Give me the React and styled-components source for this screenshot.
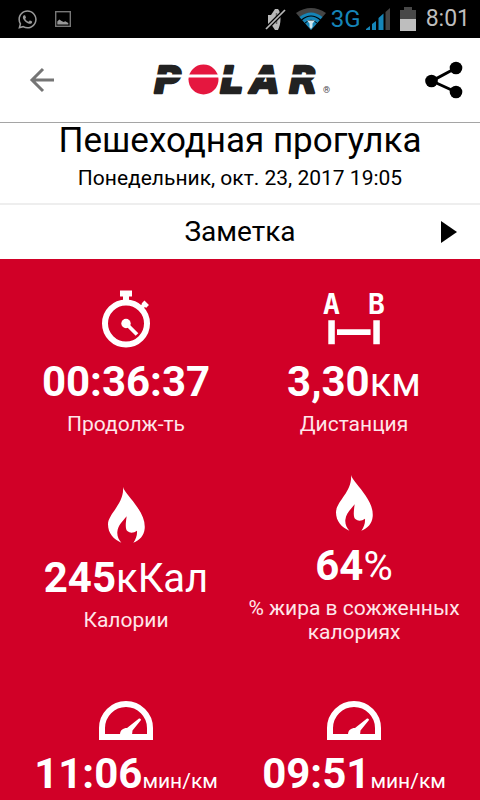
import styled, { createGlobalStyle } from "styled-components";
import { FaWhatsapp } from "react-icons/fa";

const GlobalStyle = createGlobalStyle`
  * {
    box-sizing: border-box;
  }

  body {
    margin: 0;
    background: #d10027;
    font-family: Roboto, "Noto Sans", sans-serif;
    color: #000;
  }

  h1, p, dl, dt, dd {
    margin: 0;
  }

  svg {
    display: block;
    flex: none;
    overflow: visible;
  }
`;

const StatusBar = styled.div`
  display: flex;
  align-items: center;
  justify-content: space-between;
  height: 38px;
  padding: 0 10px 0 17px;
  background: #000;
  color: #999;
`;

const StatusGroup = styled.div`
  display: flex;
  align-items: center;
  gap: ${({ $gap }) => $gap}px;
`;

const Network = styled.span`
  font-size: 24px;
  line-height: 36px;
  color: #1585b8;
`;

const Clock = styled.time`
  font-size: 23px;
  line-height: 38px;
  color: #bebebe;
`;

const Header = styled.header`
  display: flex;
  align-items: center;
  justify-content: space-between;
  height: 85px;
  padding: 0 17px 0 29px;
  background: #fff;
  border-bottom: 1px solid #a5a5a5;
`;

const IconButton = styled.button`
  display: flex;
  padding: 0;
  border: 0;
  background: none;
  color: inherit;
  cursor: pointer;
`;

const Summary = styled.section`
  padding: 1px 0 13px;
  background: #fff;
  text-align: center;
  border-bottom: 2px solid #eee;
`;

const Title = styled.h1`
  font-size: 35px;
  font-weight: 400;
  line-height: 34px;
`;

const DateText = styled.p`
  padding-top: 8px;
  font-size: 21px;
  line-height: 24px;
`;

const NoteButton = styled.button`
  display: grid;
  grid-template-columns: 1fr auto 1fr;
  align-items: center;
  width: 100%;
  height: 54px;
  padding: 0 23px;
  border: 0;
  background: #fff;
  color: #000;
  font: 400 28px/32px Roboto, "Noto Sans", sans-serif;
  cursor: pointer;

  svg {
    grid-column: 3;
    justify-self: end;
  }
`;

const NoteLabel = styled.span`
  grid-column: 2;
`;

const Metrics = styled.dl`
  display: grid;
  grid-template-columns: 1fr 1fr;
  align-items: center;
  row-gap: 38px;
  padding: 31px 12px 0;
  background: #d10027;
  color: #fff;
`;

const MetricItem = styled.div`
  display: flex;
  flex-direction: column;
  align-items: center;
  text-align: center;
`;

const IconBox = styled.div`
  display: flex;
  align-items: ${({ $align }) => $align || "center"};
  height: 58px;
  margin-bottom: 9px;
`;

const Value = styled.dd`
  font-size: 42px;
  font-weight: 700;
  line-height: 49px;
  white-space: nowrap;
`;

const Unit = styled.span`
  font-size: ${({ $small }) => ($small ? 21 : 40)}px;
  font-weight: 400;
  line-height: 1;
`;

const Label = styled.dt`
  order: 1;
  padding-top: 6px;
  font-size: 21px;
  line-height: 24px;
  color: #ffe6ea;
`;

function PictureIcon() {
  return (
    <svg width="16" height="16" viewBox="0 0 16 16" fill="none">
      <rect x="0.7" y="0.7" width="14.6" height="14.6" stroke="#777" strokeWidth="1.4" />
      <path d="M2.3 13.5V10.5l2-2 2.3 1.5 2 1 1.7-.8 3 1.8v1.5z" fill="#999" />
    </svg>
  );
}

function MuteIcon() {
  return (
    <svg width="21" height="24" viewBox="0 0 21 24">
      <path d="M3 8h3l4-6h3c2 2 2.5 6 2.5 10s-1 8-2.5 11h-3l-4-6H3z" fill="#b9b9b9" />
      <path d="M11.5 6v11" stroke="#666" strokeWidth="1.5" />
      <path d="M1 22L20 3" stroke="#000" strokeWidth="4" />
      <path d="M1 22L20 3" stroke="#b9b9b9" strokeWidth="1.7" />
    </svg>
  );
}

function WifiIcon() {
  return (
    <svg width="30" height="22" viewBox="0 0 30 22">
      <path d="M0 5Q15-5 30 5L15 22z" fill="#444" />
      <path d="M3.5 9Q15 0 26.5 9L15 22z" fill="#1585b8" />
      <path d="M5.5 12Q15 4 24.5 12" fill="none" stroke="#000" strokeWidth="1.2" />
      <path d="M8.5 15.5Q15 9 21.5 15.5" fill="none" stroke="#000" strokeWidth="1" />
      <path d="M11 12.5h8l-2.5 3V19L15 21l-1.5-2v-3.5z" fill="#cfe6ef" />
    </svg>
  );
}

function SignalIcon() {
  return (
    <svg width="24" height="22" viewBox="0 0 24 22">
      <path d="M0 22v-1l4-3v4zM6 22v-6l4-3v9zM12.5 22V10l5-4.5V22z" fill="#1585b8" />
      <path d="M19.5 22V4L24 0v22z" fill="#444" />
    </svg>
  );
}

function BatteryIcon() {
  return (
    <svg width="16" height="24" viewBox="0 0 16 24">
      <path d="M0 3h4V0h8v3h4v9H0z" fill="#484848" />
      <path d="M0 12h16v12H0z" fill="#bebebe" />
    </svg>
  );
}

function BackIcon() {
  return (
    <svg width="26" height="24" viewBox="0 0 26 24" fill="none" stroke="#757575" strokeWidth="3">
      <path d="M25 12H4M14 1L3 12l11 11" />
    </svg>
  );
}

function ShareIcon() {
  return (
    <svg width="38" height="38" viewBox="0 0 38 38">
      <path d="M31 7L7 20l24 11" fill="none" stroke="#000" strokeWidth="3" />
      <circle cx="31" cy="7" r="6.3" />
      <circle cx="6.5" cy="20" r="6.3" />
      <circle cx="31" cy="31" r="6.3" />
    </svg>
  );
}

function PolarLogo() {
  return (
    <svg width="180" height="32" viewBox="0 0 180 32" role="img" aria-label="Polar">
      <g
        fill="#222"
        stroke="#222"
        strokeWidth="2.5"
        strokeLinejoin="round"
        fontFamily="DejaVu Sans"
        fontSize="37"
        fontWeight="700"
        fontStyle="oblique"
      >
        <text x="4" y="29">P</text>
        <text x="70" y="29">L</text>
        <text x="101" y="29">A</text>
        <text x="139" y="29">R</text>
      </g>
      <circle cx="53.5" cy="15.5" r="15" fill="#e5173f" />
      <path d="M0 10.5h172v3H0z" fill="#fff" />
      <text x="173" y="29" fontFamily="Roboto" fontSize="9" fill="#444">®</text>
    </svg>
  );
}

function StopwatchIcon() {
  return (
    <svg width="50" height="58" viewBox="-1 0 50 58" fill="none" stroke="#fff">
      <circle cx="24" cy="33.5" r="21" strokeWidth="6" />
      <path d="M18 0.5h12v6H18zM21 6h6v5h-6z" fill="#fff" stroke="none" />
      <path d="M37 20l7-7" strokeWidth="4" />
      <path d="M41 12l4.5 4.5" strokeWidth="4" />
      <circle cx="24" cy="33.5" r="4.7" fill="#fff" stroke="none" />
      <path d="M24 33.5l11 11" strokeWidth="3.7" />
    </svg>
  );
}

function DistanceIcon() {
  return (
    <svg width="62" height="52" viewBox="0 0 62 52" fill="#fff">
      <g fontFamily="DejaVu Sans Mono" fontSize="28" fontWeight="700">
        <text x="0" y="21">A</text>
        <text x="45" y="21">B</text>
      </g>
      <path d="M5.3 27.3h6.5v24H5.3zM50.3 27.3h6.5v24h-6.5zM14 36.3h33.6V42H14z" />
    </svg>
  );
}

function FlameIcon() {
  return (
    <svg width="37" height="56" viewBox="0 0 111 168" fill="#fff">
      <path d="M45 0C49 15 71 35 89 62c15 22 23 43 21 63-2 20-15 35-34 42 8-11 12-22 11-36-9 7-21 8-28 2-7-6-7-18-3-45-14 18-26 27-28 47-1 13 4 23 12 32C18 158 0 140 0 112 0 80 50 50 45 0z" />
    </svg>
  );
}

function GaugeIcon() {
  return (
    <svg width="54" height="39" viewBox="0 0 54 39">
      <path d="M3 36V27a24 24 0 0 1 48 0v9z" fill="none" stroke="#fff" strokeWidth="6" />
      <path d="M21 34c0-5 3-7 7-7l12-9.5q2-.5 2 1.5L33.5 29.5 33 34z" fill="#fff" />
    </svg>
  );
}

const metrics = [
  { icon: <StopwatchIcon />, value: "00:36:37", label: "Продолж-ть" },
  { icon: <DistanceIcon />, value: "3,30", unit: "км", label: "Дистанция" },
  { icon: <FlameIcon />, value: "245", unit: "кКал", label: "Калории" },
  { icon: <FlameIcon />, value: "64", unit: "%", label: "% жира в сожженных калориях" },
  { icon: <GaugeIcon />, value: "11:06", unit: "мин/км", smallUnit: true, align: "flex-end" },
  { icon: <GaugeIcon />, value: "09:51", unit: "мин/км", smallUnit: true, align: "flex-end" },
];

function Metric({ icon, value, unit, smallUnit, label, align }) {
  return (
    <MetricItem>
      <IconBox $align={align}>{icon}</IconBox>
      {label && <Label>{label}</Label>}
      <Value>
        {value}
        {unit && <Unit $small={smallUnit}>{unit}</Unit>}
      </Value>
    </MetricItem>
  );
}

function App() {
  return (
    <>
      <GlobalStyle />
      <StatusBar>
        <StatusGroup $gap={17}>
          <FaWhatsapp size={21} />
          <PictureIcon />
        </StatusGroup>
        <StatusGroup $gap={10}>
          <MuteIcon />
          <StatusGroup $gap={5}>
            <WifiIcon />
            <Network>3G</Network>
            <SignalIcon />
          </StatusGroup>
          <BatteryIcon />
          <Clock>8:01</Clock>
        </StatusGroup>
      </StatusBar>
      <Header>
        <IconButton type="button" aria-label="Назад">
          <BackIcon />
        </IconButton>
        <PolarLogo />
        <IconButton type="button" aria-label="Поделиться">
          <ShareIcon />
        </IconButton>
      </Header>
      <main>
        <Summary>
          <Title>Пешеходная прогулка</Title>
          <DateText>Понедельник, окт. 23, 2017 19:05</DateText>
        </Summary>
        <NoteButton type="button">
          <NoteLabel>Заметка</NoteLabel>
          <svg width="16" height="22" viewBox="0 0 16 22">
            <path d="M0 0l16 11L0 22z" />
          </svg>
        </NoteButton>
        <Metrics>
          {metrics.map((metric, index) => (
            <Metric key={index} {...metric} />
          ))}
        </Metrics>
      </main>
    </>
  );
}

export default App;
